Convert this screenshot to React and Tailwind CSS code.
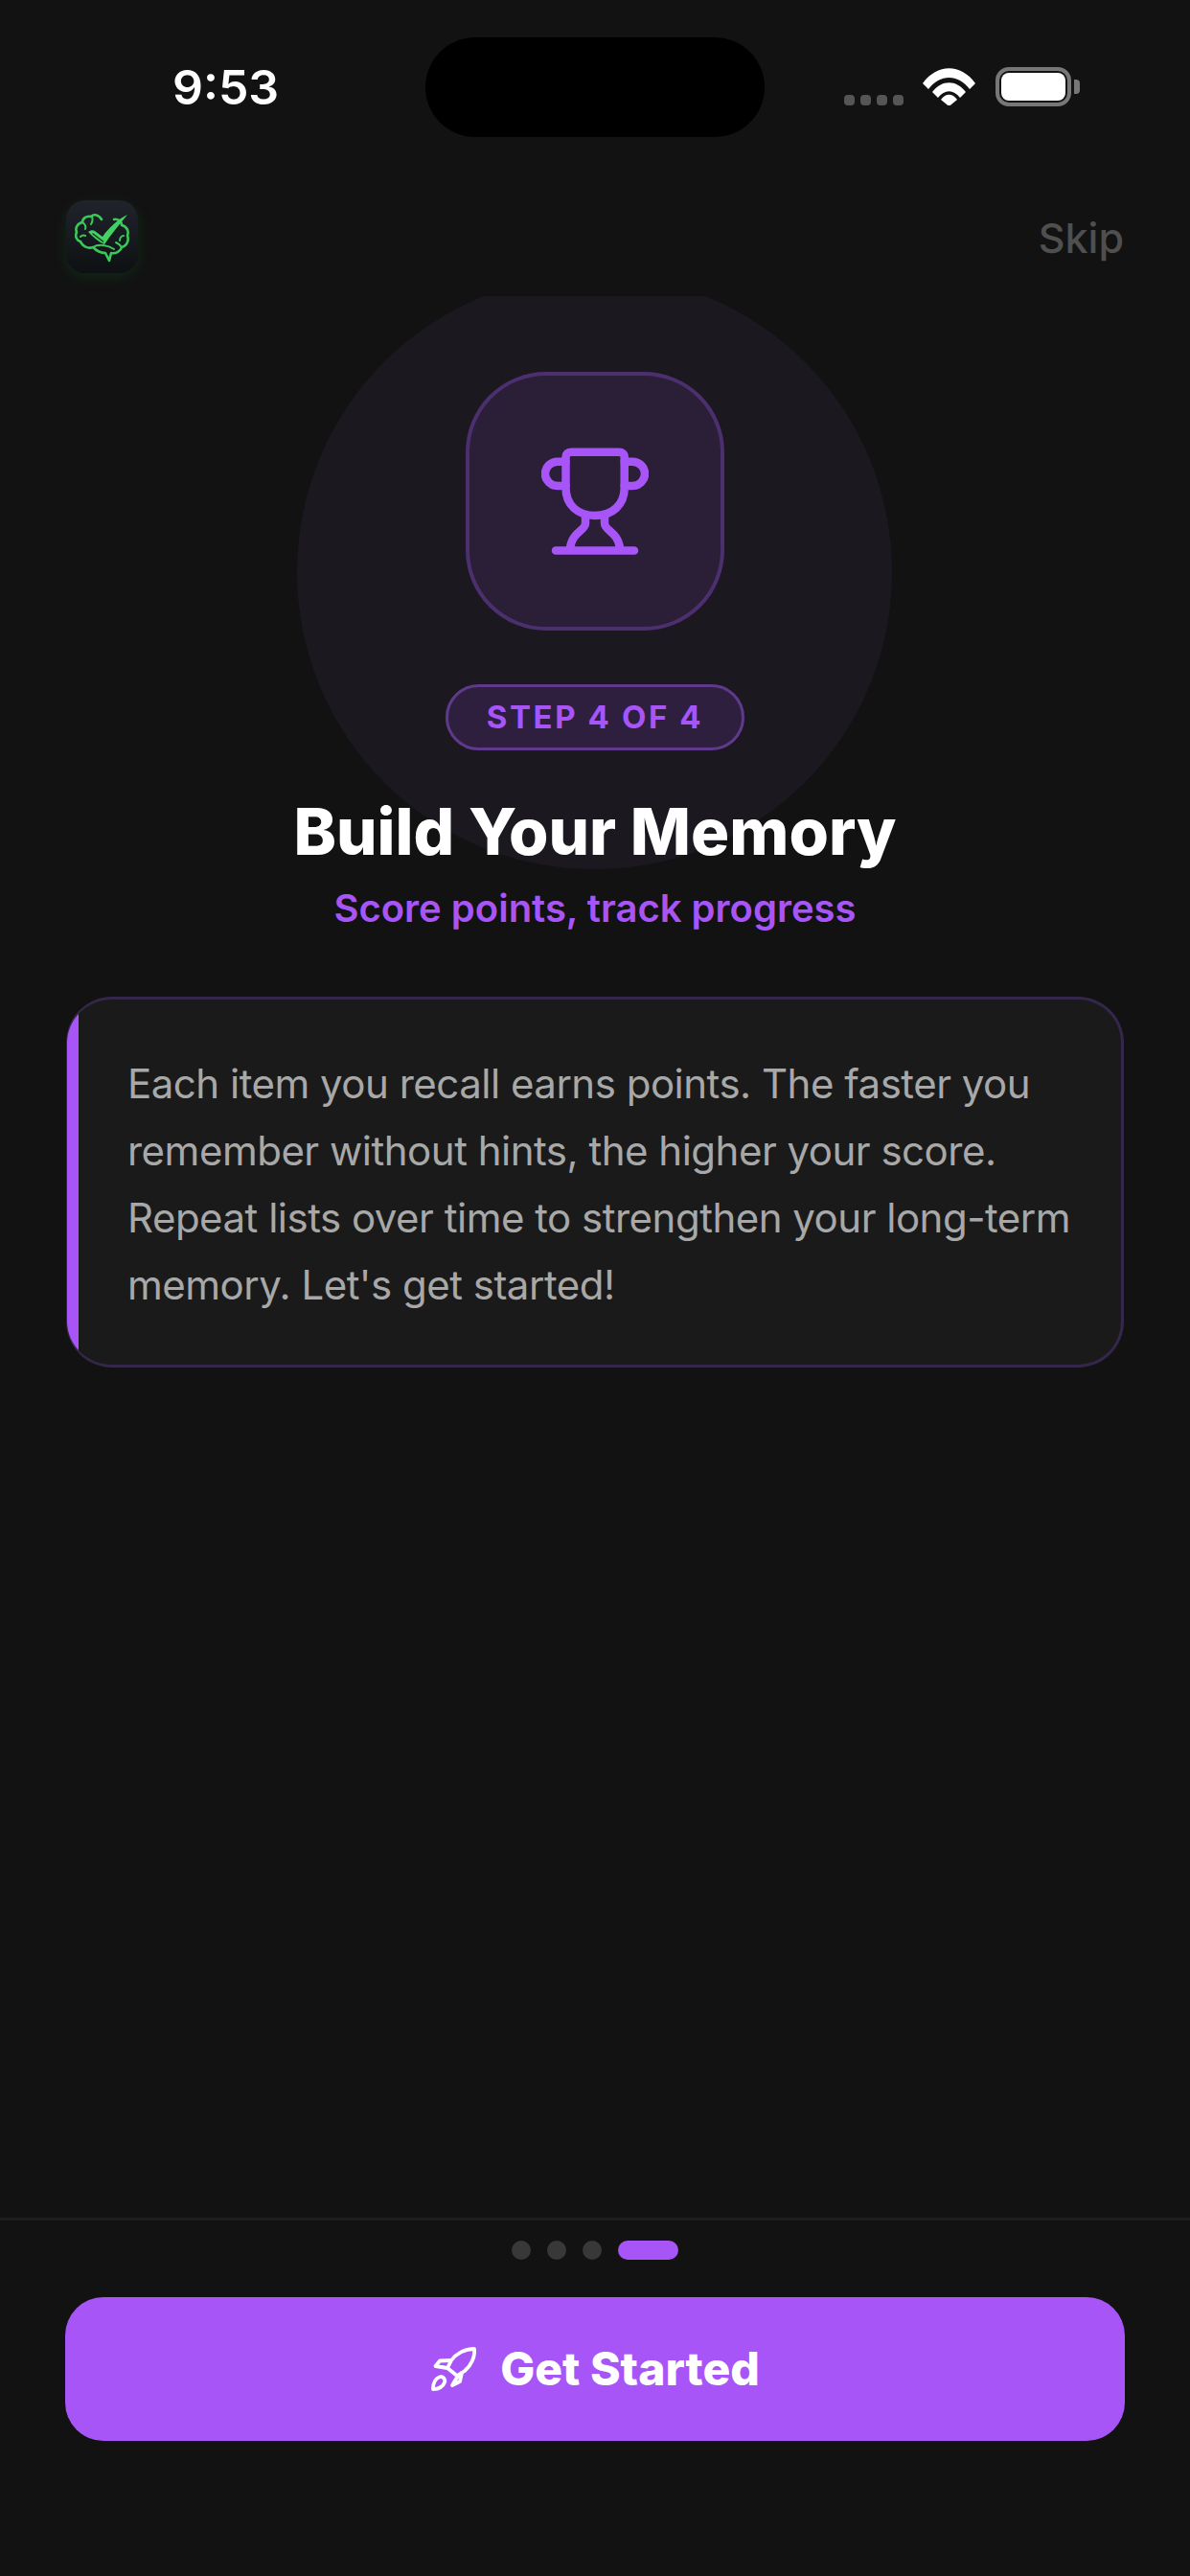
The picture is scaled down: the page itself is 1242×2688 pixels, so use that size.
const font = { fontFamily: '"Inter", "Liberation Sans", sans-serif' };

function StatusBar() {
    return (
        <div className="flex h-[146px] items-start pl-[180px] pt-[39px]">
            <div className="mt-[28px] w-[264px] text-[50px] leading-[48px] font-semibold text-white">9:53</div>
            <div className="h-[104px] w-[354px] rounded-[52px] bg-black"></div>
            <div className="ml-[83px] mt-[31px] flex items-start">
                <div className="mt-[29px] flex gap-[6px]">
                    <div className="h-[11px] w-[11px] rounded-[4px] bg-[#555555]"></div>
                    <div className="h-[11px] w-[11px] rounded-[4px] bg-[#555555]"></div>
                    <div className="h-[11px] w-[11px] rounded-[4px] bg-[#555555]"></div>
                    <div className="h-[11px] w-[11px] rounded-[4px] bg-[#555555]"></div>
                </div>
                <svg className="ml-[20px]" width="55" height="40" viewBox="0 0 55 40" fill="#ffffff">
                    <path d="M0 17 C15 -4 40 -4 55 17 L49 23 C37 7 18 7 6 23 Z" />
                    <path d="M10 26 C20 13 35 13 45 26 L39 32 C32 23 23 23 16 32 Z" />
                    <path d="M19 34 C24 27 31 27 36 34 L27.5 41 Z" />
                </svg>
                <div className="ml-[21px] flex h-[41px] w-[79px] items-center justify-center rounded-[14px] border-[4px] border-[#777777]">
                    <div className="h-[29px] w-[67px] rounded-[8px] bg-white"></div>
                </div>
                <div className="ml-[3px] mt-[13px] h-[15px] w-[6px] rounded-r-[4px] bg-[#777777]"></div>
            </div>
        </div>
    );
}

function BrainLogo() {
    return (
        <div className="flex h-[76px] w-[75px] items-center justify-center rounded-[20px] bg-linear-to-b from-[#20232b] to-[#0e1113] shadow-[0_4px_14px_rgba(20,120,50,0.22)]">
            <svg width="75" height="76" viewBox="0 0 75 76" fill="none" stroke="#3cc859" strokeWidth="2.6" strokeLinecap="round" strokeLinejoin="round">
                <path d="M37 20 C34 15 29 14 26 17 C21 16 17 19 17 23 C12 24 9 29 11 33 C9 38 11 42 15 43 C17 48 23 51 28 49 C32 53 37 55 41 55 L45 63 L47 55 C52 56 57 53 58 49 C63 48 66 42 64 37 C66 32 63 27 58 26 C58 22 54 19 50 20" />
                <path d="M17 23 C20 25 21 27 20 30 M27 17 C28 20 28 22 26 25 M28 49 C34 45 44 47 50 51 M58 49 C56 46 54 45 52 44 M60 37 C58 37 56 39 56 42 M15 38 C17 36 18 36 20 37" strokeWidth="2" />
                <path d="M23 33 C26 31 28 31 30 32 L38 38 C45 28 54 20 64 15 C56 25 47 35 40 46 C33 43 28 38 23 33 Z" fill="#45d063" stroke="none" />
                <path d="M28 35 L38.5 43" stroke="#173a24" strokeWidth="1.5" />
            </svg>
        </div>
    );
}

function Trophy() {
    return (
        <svg width="112" height="112" viewBox="0 0 112 112" fill="none" stroke="#a855f7" strokeWidth="8.5" strokeLinecap="round" strokeLinejoin="round">
            <path d="M25.5 42 C25.5 60 38 71 56 71 C74 71 86.7 60 86.7 42 V10 C86.7 6.5 84.5 4.7 81 4.7 H31 C27.5 4.7 25.5 6.5 25.5 10 Z" />
            <path d="M25.5 14.7 H17 A13 12.6 0 0 0 17 40 H25.5" />
            <path d="M86.7 14.7 H95 A13 12.6 0 0 1 95 40 H86.7" />
            <path d="M46 71 V79 C46 87 32 88 30 105" />
            <path d="M66 71 V79 C66 87 80 88 82 105" />
            <path d="M15 107.5 H97" />
        </svg>
    );
}

function RocketIcon() {
    return (
        <svg width="48" height="46" viewBox="0 0 48 46" fill="none" stroke="#ffffff" strokeWidth="3.8" strokeLinecap="round" strokeLinejoin="round">
            <path d="M46 2 C36 2 27 7 22 14 L18 22 L28 30 L36 25 C43 19 47 10 46 2 Z" />
            <path d="M21 14 L10 14.5 L5.5 20 L18 22" />
            <path d="M29 30 L23 40 L31 36 L33 27" />
            <path d="M3 44 C3 37 6 32 11 31 C14 31 16 34 15 37 C13 42 8 44 3 44 Z" />
        </svg>
    );
}

export default function App() {
    return (
        <div className="flex h-[2688px] w-[1242px] flex-col bg-[#121212]" style={font}>
            <StatusBar />

            <div className="mt-[63px] flex items-start justify-between px-[69px]">
                <BrainLogo />
                <span className="mt-[14px] text-[43px] leading-[50px] font-medium text-[#4f4f4f]">Skip</span>
            </div>

            <div className="relative mt-[24px] flex flex-col items-center overflow-hidden pt-[79px] pb-[69px]">
                <div className="absolute left-[310px] top-[-22px] h-[620px] w-[621px] rounded-full bg-[#1b1820]"></div>
                <div className="relative flex h-[270px] w-[270px] items-center justify-center rounded-[84px] border-[4px] border-[#4b2f6e] bg-[#2a1f36]">
                    <Trophy />
                </div>
                <div className="relative mt-[56px] flex h-[69px] w-[312px] items-center justify-center rounded-full border-[3px] border-[#5f3a8c] bg-[#2e1f3f] text-[33px] font-bold tracking-[2.6px] text-[#a855f7]">
                    STEP 4 OF 4
                </div>
                <h1 className="relative mt-[45px] text-[67px] leading-[80px] font-extrabold text-white">Build Your Memory</h1>
                <p className="relative mt-[17px] text-[40px] leading-[46px] font-semibold text-[#a855f7]">Score points, track progress</p>
            </div>

            <div className="mx-[69px] flex overflow-hidden rounded-[48px] border-[3px] border-l-[1px] border-[#35274c] bg-[#1a1a1a]">
                <div className="w-[12px] shrink-0 bg-[#a855f7]"></div>
                <p className="pb-[48px] pl-[51px] pr-[30px] pt-[53px] text-[42px] leading-[70px] tracking-[-0.5px] text-[#a8a8a8]">
                    Each item you recall earns points. The faster you remember without hints, the higher your score. Repeat lists over time to strengthen your long-term memory. Let's get started!
                </p>
            </div>

            <div className="flex-1"></div>

            <div className="border-t-[3px] border-[#1e1e1e] px-[68px] pb-[141px] pt-[21px]">
                <div className="flex items-center justify-center gap-[17px]">
                    <div className="h-[20px] w-[20px] rounded-full bg-[#383838]"></div>
                    <div className="h-[20px] w-[20px] rounded-full bg-[#383838]"></div>
                    <div className="h-[20px] w-[20px] rounded-full bg-[#383838]"></div>
                    <div className="h-[20px] w-[63px] rounded-full bg-[#a855f7]"></div>
                </div>
                <button className="mt-[39px] flex h-[150px] w-full items-center justify-center gap-[25px] rounded-[40px] bg-[#a855f7] text-[48px] font-extrabold text-white">
                    <RocketIcon />
                    Get Started
                </button>
            </div>
        </div>
    );
}
